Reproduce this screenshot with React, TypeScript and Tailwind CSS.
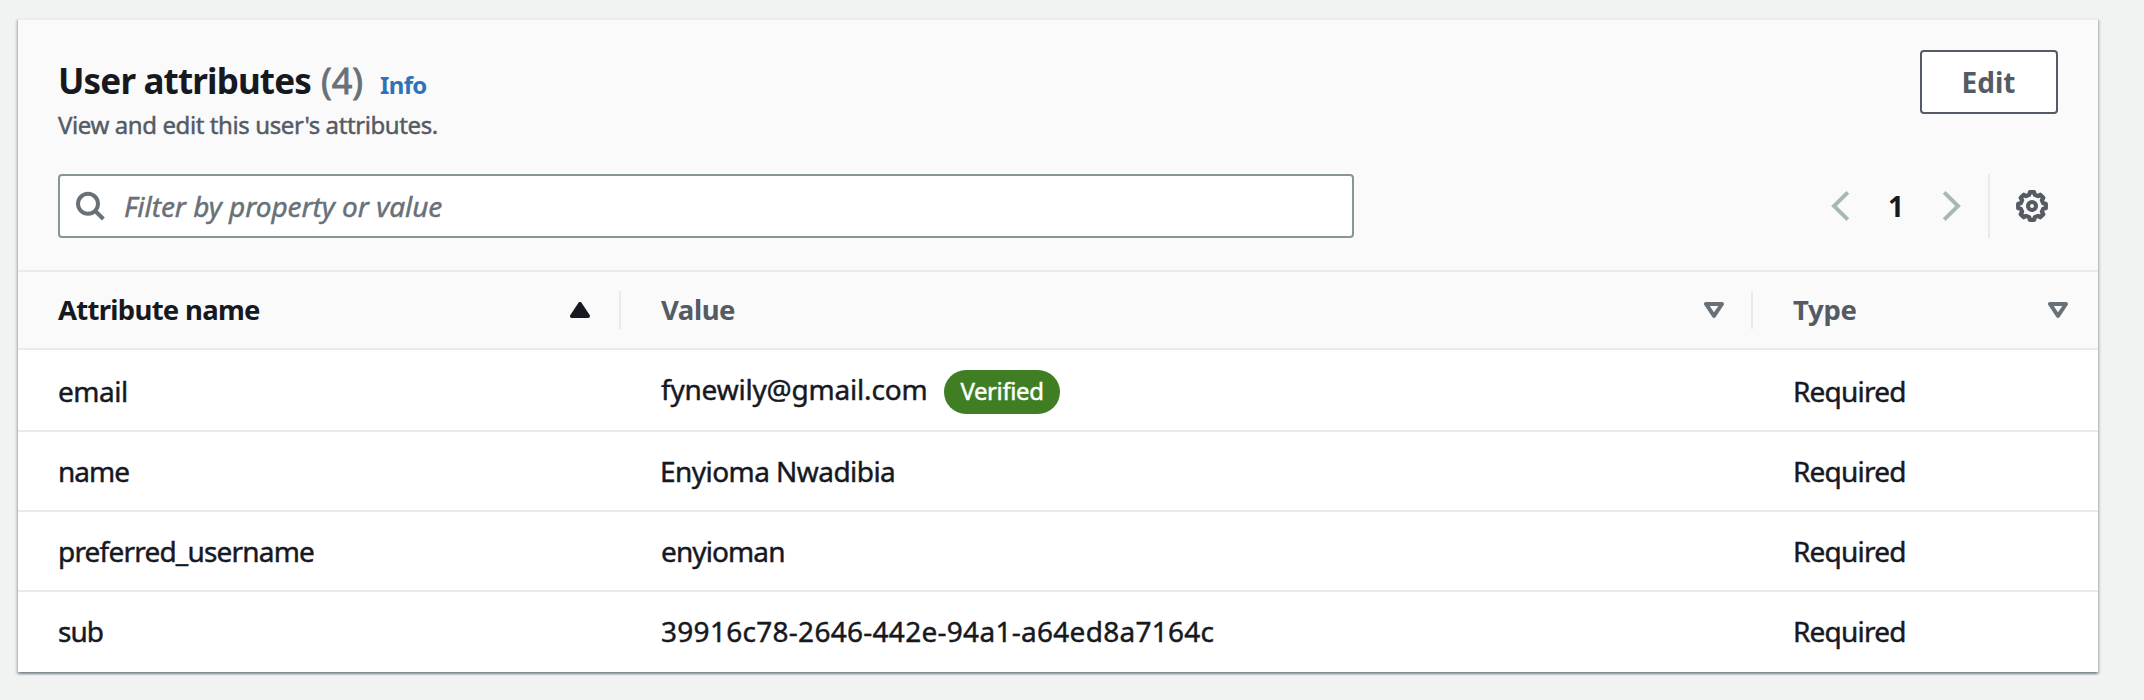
import type { ReactNode } from "react";

type Attribute = { name: ReactNode; value: ReactNode };

const attributes: Attribute[] = [
  {
    name: <span className="relative top-px tracking-[-0.5px]">email</span>,
    value: (
      <div className="relative -top-px flex items-center">
        <span className="w-[268px] tracking-[-0.2px]">fynewily@gmail.com</span>
        <span className="relative top-[3px] ml-[15px] flex h-11 w-[116px] items-center justify-center rounded-[22px] bg-[#3f7e23] pb-[3px] text-2xl tracking-[-0.4px] text-white">
          Verified
        </span>
      </div>
    ),
  },
  {
    name: <span className="tracking-[-1px]">name</span>,
    value: <span className="-ml-px tracking-[-0.55px]">Enyioma Nwadibia</span>,
  },
  {
    name: <span className="tracking-[-0.8px]">preferred_username</span>,
    value: <span className="tracking-[-0.9px]">enyioman</span>,
  },
  {
    name: <span className="tracking-[-1px]">sub</span>,
    value: <span className="tracking-[0.28px]">39916c78-2646-442e-94a1-a64ed8a7164c</span>,
  },
];

function gearPoints() {
  const points: string[] = [];
  for (let i = 0; i < 8; i++) {
    const tooth = i * 45;
    for (const [offset, radius] of [
      [-9, 14],
      [9, 14],
      [14, 11.5],
      [31, 11.5],
    ]) {
      const angle = ((tooth + offset - 90) * Math.PI) / 180;
      points.push(`${(16 + radius * Math.cos(angle)).toFixed(2)},${(16 + radius * Math.sin(angle)).toFixed(2)}`);
    }
  }
  return points.join(" ");
}

function GearIcon() {
  return (
    <svg width="32" height="32" viewBox="0 0 32 32" fill="none" stroke="#545b64" strokeWidth="4.2">
      <polygon points={gearPoints()} strokeLinejoin="round" />
      <circle cx="16" cy="16" r="4" />
    </svg>
  );
}

function SearchIcon() {
  return (
    <svg width="32" height="32" viewBox="0 0 32 32" fill="none" stroke="#687078" strokeWidth="4">
      <circle cx="14" cy="13.8" r="10" />
      <path d="M21 20.8l8.4 8.2" />
    </svg>
  );
}

function Chevron({ direction }: { direction: "left" | "right" }) {
  return (
    <svg width="20" height="32" viewBox="0 0 20 32" fill="none" stroke="#aab7b8" strokeWidth="4">
      <path d={direction === "left" ? "M17.8 2.3L4 16l13.8 13.7" : "M2.2 2.3L16 16L2.2 29.7"} />
    </svg>
  );
}

function SortUp() {
  return (
    <svg width="20" height="16" viewBox="0 0 20 16" fill="#16191f" stroke="#16191f" strokeWidth="4" strokeLinejoin="round">
      <path d="M10 2L2 14h16z" />
    </svg>
  );
}

function SortDown() {
  return (
    <svg width="20" height="16" viewBox="0 0 20 16" fill="none" stroke="#687078" strokeWidth="4" strokeLinejoin="round">
      <path d="M2 2h16l-8 11.8z" />
    </svg>
  );
}

export default function App() {
  return (
    <div className="h-[700px] w-full bg-[#f1f3f3] pt-[18px] pl-[18px] font-['Noto_Sans',sans-serif] text-[28px] leading-9 text-[#16191f] [-webkit-text-stroke:0.45px_currentColor]">
      <section className="h-[654px] w-[2080px] border-t-2 border-[#eaeded] bg-white shadow-[0_2px_2px_0_rgba(0,28,36,0.3),2px_2px_2px_0_rgba(0,28,36,0.15),-2px_2px_2px_0_rgba(0,28,36,0.15)]">
        <header className="h-[250px] bg-[#fafafa] px-10 pt-[30px]">
          <div className="flex h-[124px] items-start justify-between">
            <div className="pt-[13px]">
              <div className="flex items-baseline">
                <h2 className="text-[35px] leading-9 font-bold tracking-[-0.85px] [-webkit-text-stroke:0px]">User attributes</h2>
                <span className="ml-[10px] text-4xl leading-9 text-[#687078] [-webkit-text-stroke:0.8px_#687078]">(4)</span>
                <a className="ml-[17px] text-2xl leading-9 font-bold tracking-[-0.7px] text-[#2e73b8] [-webkit-text-stroke:0px]">Info</a>
              </div>
              <p className="mt-2 text-2xl leading-7 tracking-[-0.4px] text-[#545b64]">
                View and edit this user's attributes.
              </p>
            </div>
            <button className="flex h-16 w-[138px] items-center justify-center rounded border-2 border-[#545b64] bg-white pr-px font-bold text-[#545b64] [-webkit-text-stroke:0px]">
              Edit
            </button>
          </div>
          <div className="flex h-16 items-center justify-between">
            <div className="flex h-16 w-[1296px] items-center rounded border-2 border-[#879596] bg-white pl-[14px]">
              <SearchIcon />
              <span className="ml-[18px] tracking-[-0.05px] text-[#687078] italic">Filter by property or value</span>
            </div>
            <div className="flex h-16 items-center pr-[10px]">
              <Chevron direction="left" />
              <span className="w-[92px] text-center font-bold [-webkit-text-stroke:0px]">1</span>
              <Chevron direction="right" />
              <div className="mr-[26px] ml-[26px] h-16 w-0.5 bg-[#eaeaea]" />
              <GearIcon />
            </div>
          </div>
        </header>

        <div className="flex h-20 items-center border-y-2 border-[#eaeaea] bg-[#fafafa] font-bold text-[#545b64] [-webkit-text-stroke:0px]">
          <div className="flex h-[38px] w-[603px] items-center justify-between border-r-2 border-[#eaeaea] pr-[29px] pl-10 text-[#16191f]">
            <span className="text-[27.5px] tracking-[-0.72px]">Attribute name</span>
            <SortUp />
          </div>
          <div className="flex h-[38px] w-[1132px] items-center justify-between border-r-2 border-[#eaeaea] pr-[27px] pl-10">
            <span className="text-[27.5px] tracking-[-0.45px]">Value</span>
            <SortDown />
          </div>
          <div className="flex h-[38px] flex-1 items-center justify-between pr-[30px] pl-10">
            <span className="text-[27.5px] tracking-[-0.3px]">Type</span>
            <SortDown />
          </div>
        </div>

        {attributes.map((attribute, index) => (
          <div
            key={index}
            className="flex h-20 items-center border-b-2 border-[#eaeaea] last:border-b-0 last:pb-0.5 nth-[3]:h-[82px]"
          >
            <div className="w-[603px] pl-10">{attribute.name}</div>
            <div className="w-[1132px] pl-10">{attribute.value}</div>
            <div className="pl-10 tracking-[-0.8px]">
              <span className={index === 0 ? "relative top-px" : ""}>Required</span>
            </div>
          </div>
        ))}
      </section>
    </div>
  );
}
